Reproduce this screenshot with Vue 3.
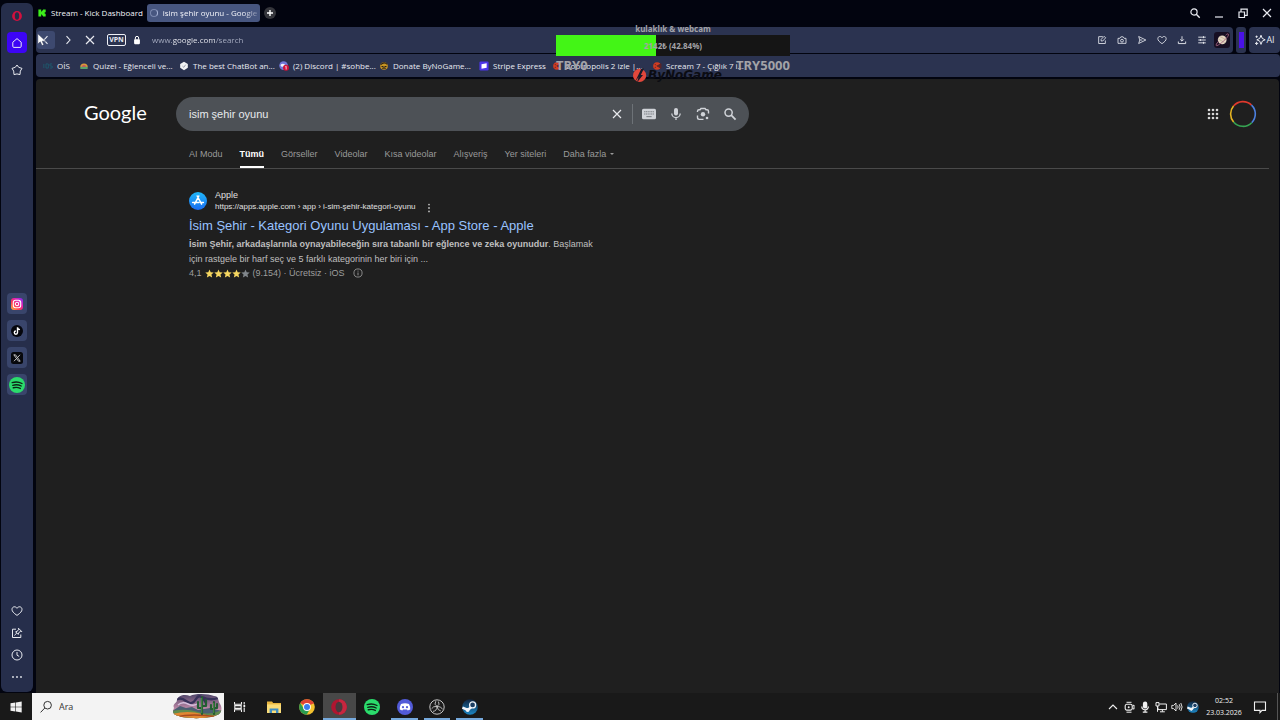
<script setup>
import { ref } from 'vue'

const address = ref('www.google.com/search')
const query = ref('isim şehir oyunu')
const taskSearch = ref('')

const bookmarks = [
  { icon: 'b-ois', label: 'OİS', size: 'tiny' },
  { icon: 'b-quiz', label: 'Quizei - Eğlenceli ve...' },
  { icon: 'b-chat', label: 'The best ChatBot an...' },
  { icon: 'b-discord', label: '(2) Discord | #sohbe...' },
  { icon: 'b-donate', label: 'Donate ByNoGame...' },
  { icon: 'b-stripe', label: 'Stripe Express', size: 'short' },
  { icon: 'b-film', label: 'Zootropolis 2 izle |...' },
  { icon: 'b-film', label: 'Scream 7 - Çığlık 7 i...' },
]

const pageTools = [
  { icon: 'i-edit', label: 'Düzenle' },
  { icon: 'i-camera', label: 'Anlık görüntü' },
  { icon: 'i-send', label: 'Gönder' },
  { icon: 'i-heart', label: 'Sabitle' },
  { icon: 'i-download', label: 'İndirilenler' },
  { icon: 'i-sliders', label: 'Kolay kurulum' },
]

const windowTools = [
  { icon: 'i-search', label: 'Sekmelerde ara' },
  { icon: 'i-min', label: 'Küçült' },
  { icon: 'i-restore', label: 'Geri yükle' },
  { icon: 'i-x', label: 'Kapat' },
]

const sideApps = [
  { icon: 'a-insta', label: 'Instagram' },
  { icon: 'a-tiktok', label: 'TikTok' },
  { icon: 'a-x', label: 'X' },
  { icon: 'a-spotify', label: 'Spotify' },
]

const sideTools = [
  { icon: 'i-heart', label: 'Sabitlenenler' },
  { icon: 'i-pinbox', label: 'Notlar' },
  { icon: 'i-clock', label: 'Geçmiş' },
  { icon: 'i-dots', label: 'Diğer' },
]

const filters = ['AI Modu', 'Tümü', 'Görseller', 'Videolar', 'Kısa videolar', 'Alışveriş', 'Yer siteleri']

const apps = [
  { icon: 't-folder', label: 'Dosya Gezgini' },
  { icon: 't-chrome', label: 'Chrome' },
  { icon: 't-opera', label: 'Opera', state: 'active' },
  { icon: 'a-spotify', label: 'Spotify' },
  { icon: 't-discord', label: 'Discord', state: 'open' },
  { icon: 't-obs', label: 'OBS', state: 'open' },
  { icon: 't-steam', label: 'Steam', state: 'open' },
]

const tray = [
  { icon: 'i-chev-up', label: 'Gizli simgeler' },
  { icon: 'i-meet', label: 'Kamera' },
  { icon: 'i-micfill', label: 'Mikrofon' },
  { icon: 'i-net', label: 'Ağ' },
  { icon: 'i-volume', label: 'Ses' },
  { icon: 't-steam', label: 'Steam' },
]
</script>

<template>
  <div class="desktop">
    <svg class="sprite" aria-hidden="true">
      <defs>
        <linearGradient id="g-insta" x1="0" y1="1" x2="1" y2="0">
          <stop offset="0" stop-color="#ffc53d" /><stop offset=".35" stop-color="#ff3a4e" />
          <stop offset=".65" stop-color="#e01fb0" /><stop offset="1" stop-color="#7a2cf5" />
        </linearGradient>
        <linearGradient id="g-store" x1="0" y1="0" x2="0" y2="1">
          <stop offset="0" stop-color="#1fb8fa" /><stop offset="1" stop-color="#1b6cf0" />
        </linearGradient>
        <linearGradient id="g-sky" x1="0" y1="0" x2="0" y2="1">
          <stop offset="0" stop-color="#4d4468" /><stop offset=".6" stop-color="#c08aa8" /><stop offset="1" stop-color="#e2a58c" />
        </linearGradient>
        <linearGradient id="g-steam" x1="0" y1="0" x2="0" y2="1">
          <stop offset="0" stop-color="#10243f" /><stop offset="1" stop-color="#1c86c4" />
        </linearGradient>
        <clipPath id="c-scene"><path d="M2 14C0 10 5 9 5 6C6 1 13 0 18 2C24-1 37 0 42 2C47 2 46 7 48 10C51 14 49 20 45 21C38 25 14 25 7 22C1 21 0 17 2 14Z" /></clipPath>
      </defs>
      <symbol id="i-x" viewBox="0 0 12 12"><path d="M2 2L10 10M10 2L2 10" fill="none" stroke="currentColor" stroke-width="1.2" /></symbol>
      <symbol id="i-min" viewBox="0 0 12 12"><path d="M2 10H10" stroke="currentColor" stroke-width="1.2" /></symbol>
      <symbol id="i-restore" viewBox="0 0 12 12"><path d="M2 5H7.5V10.5H2ZM4 5V2.2H10.2V8.4H7.5" fill="none" stroke="currentColor" stroke-width="1.2" /></symbol>
      <symbol id="i-search" viewBox="0 0 12 12"><circle cx="5" cy="5" r="3.1" fill="none" stroke="currentColor" stroke-width="1.2" /><path d="M7.3 7.3L10.7 10.7" stroke="currentColor" stroke-width="1.4" /></symbol>
      <symbol id="i-back" viewBox="0 0 12 12"><path d="M7.5 2.2L4 6L7.5 9.8" fill="none" stroke="currentColor" stroke-width="1.1" /></symbol>
      <symbol id="i-fwd" viewBox="0 0 12 12"><path d="M4.5 2.2L8 6L4.5 9.8" fill="none" stroke="currentColor" stroke-width="1.1" /></symbol>
      <symbol id="i-lock" viewBox="0 0 12 12"><rect x="2.5" y="5" width="7" height="6" rx="1" fill="currentColor" /><path d="M4 5.5V3.6A2 2 0 0 1 8 3.6V5.5" fill="none" stroke="currentColor" stroke-width="1.2" /></symbol>
      <symbol id="i-home" viewBox="0 0 12 12"><path d="M1.8 5.2L6 1.6L10.2 5.2V9.3Q10.2 10.4 9.1 10.4H2.9Q1.8 10.4 1.8 9.3Z" fill="none" stroke="currentColor" stroke-linejoin="round" /></symbol>
      <symbol id="i-penta" viewBox="0 0 12 12"><path d="M6 1L7.7 3.3L11 4.4L9.3 7.1L9 10.6L6 9.9L3 10.6L2.7 7.1L1 4.4L4.3 3.3Z" fill="none" stroke="currentColor" stroke-linejoin="round" /></symbol>
      <symbol id="i-edit" viewBox="0 0 12 12"><path d="M7 2H2V10.2H10V6.5M5 7.2V5.2L8.6 1.6L10.4 3.4L6.9 7.2Z" fill="none" stroke="currentColor" /></symbol>
      <symbol id="i-camera" viewBox="0 0 12 12"><path d="M1.2 4H3.4L4.6 2.2H7.4L8.6 4H10.8V10H1.2Z" fill="none" stroke="currentColor" stroke-linejoin="round" /><circle cx="6" cy="6.8" r="1.7" fill="none" stroke="currentColor" /></symbol>
      <symbol id="i-send" viewBox="0 0 12 12"><path d="M2 1.8L10.6 6L2 10.2L3.4 6ZM3.4 6H6.5" fill="none" stroke="currentColor" stroke-linejoin="round" /></symbol>
      <symbol id="i-heart" viewBox="0 0 12 12"><path d="M6 10.4C2.5 8 1 6.3 1 4.4C1 1.4 4.7.9 6 3.3C7.3.9 11 1.4 11 4.4C11 6.3 9.5 8 6 10.4Z" fill="none" stroke="currentColor" /></symbol>
      <symbol id="i-download" viewBox="0 0 12 12"><path d="M6 1.5V7.2M3.8 5.2L6 7.4L8.2 5.2M1.6 7.8V10.3H10.4V7.8" fill="none" stroke="currentColor" stroke-width="1.1" /></symbol>
      <symbol id="i-sliders" viewBox="0 0 12 12"><path d="M1.5 2.6H10.5M1.5 6H10.5M1.5 9.4H10.5M7.8 1.4V3.8M4 4.8V7.2M7.8 8.2V10.6" stroke="currentColor" stroke-width="1.1" /></symbol>
      <symbol id="i-pinbox" viewBox="0 0 12 12"><path d="M5 2.2H1.5V10.5H9.8V7.5M3.4 8.4L5.8 6M4.6 4.8L7.2 7.4L7.7 5.7L9.6 4.4L10.8 4.6L7.4 1.2L7.6 2.4L6.3 4.3Z" fill="none" stroke="currentColor" stroke-linejoin="round" /></symbol>
      <symbol id="i-clock" viewBox="0 0 12 12"><circle cx="6" cy="6" r="5" fill="none" stroke="currentColor" /><path d="M6 3V6.2L8.2 7.4" fill="none" stroke="currentColor" /></symbol>
      <symbol id="i-dots" viewBox="0 0 12 12"><g fill="currentColor"><circle cx="2" cy="6" r=".9" /><circle cx="6" cy="6" r=".9" /><circle cx="10" cy="6" r=".9" /></g></symbol>
      <symbol id="i-kebab" viewBox="0 0 12 12"><g fill="currentColor"><circle cx="6" cy="2.6" r=".9" /><circle cx="6" cy="6" r=".9" /><circle cx="6" cy="9.4" r=".9" /></g></symbol>
      <symbol id="i-spark" viewBox="0 0 12 12"><path d="M7 1.2Q7.4 5.4 11.2 5.8Q7.4 6.2 7 10.4Q6.6 6.2 2.8 5.8Q6.6 5.4 7 1.2ZM2.6 7.8V11M1 9.4H4.2M2.6 1.6V3.8M1.5 2.7H3.7" fill="none" stroke="currentColor" stroke-linejoin="round" /></symbol>
      <symbol id="i-planet" viewBox="0 0 16 16"><rect width="16" height="16" rx="3" fill="#160e22" /><circle cx="8.2" cy="7.8" r="4.4" fill="#e3d6c2" /><path d="M6 4.6L12 7.6M4.3 7L10.4 10.4" stroke="#b09a86" stroke-width=".6" /><path d="M4.4 9.4C1.4 12.8 1.4 14.6 4 13.2C8 11 15.6 4 14.4 2.2C13.8 1.4 12.6 2.2 11.6 3.2" fill="none" stroke="#a0607c" stroke-width=".9" /></symbol>
      <symbol id="i-keyboard" viewBox="0 0 16 12"><rect x="0" y="0" width="16" height="12" rx="1.8" fill="currentColor" /><path d="M2.4 3.4H13.6M2.4 6H13.6" stroke="#777b80" stroke-width="1.3" stroke-dasharray="1.4 .6" /><path d="M5 9H11" stroke="#777b80" stroke-width="1.2" /></symbol>
      <symbol id="i-mic" viewBox="0 0 14 14"><rect x="5" y="1" width="4" height="7.4" rx="2" fill="currentColor" /><path d="M2.8 6.4A4.2 4.2 0 0 0 11.2 6.4M7 10.4V13" fill="none" stroke="currentColor" stroke-width="1.3" /></symbol>
      <symbol id="i-lens" viewBox="0 0 14 14"><path d="M1.5 5V4.2Q1.5 2.8 3 2.8H4L5 1.5H9L10 2.8H11Q12.5 2.8 12.5 4.2V6.4M1.5 8.5V10.6Q1.5 12.4 3.3 12.4H7.5" fill="none" stroke="currentColor" stroke-width="1.4" /><circle cx="7" cy="7.2" r="2.2" fill="currentColor" /><circle cx="11" cy="11" r="1.3" fill="currentColor" /></symbol>
      <symbol id="i-glass" viewBox="0 0 14 14"><circle cx="5.6" cy="5.6" r="3.6" fill="none" stroke="currentColor" stroke-width="1.5" /><path d="M8.2 8.2L12.6 12.6" stroke="currentColor" stroke-width="1.8" /></symbol>
      <symbol id="i-grid" viewBox="0 0 12 12"><g fill="currentColor"><circle cx="2" cy="2" r="1.3" /><circle cx="6" cy="2" r="1.3" /><circle cx="10" cy="2" r="1.3" /><circle cx="2" cy="6" r="1.3" /><circle cx="6" cy="6" r="1.3" /><circle cx="10" cy="6" r="1.3" /><circle cx="2" cy="10" r="1.3" /><circle cx="6" cy="10" r="1.3" /><circle cx="10" cy="10" r="1.3" /></g></symbol>
      <symbol id="i-info" viewBox="0 0 12 12"><circle cx="6" cy="6" r="4.9" fill="none" stroke="currentColor" /><path d="M6 5.4V8.8M6 3.2V4.3" stroke="currentColor" stroke-width="1.1" /></symbol>
      <symbol id="i-star" viewBox="0 0 12 12"><path d="M6 .6L7.6 4.3L11.6 4.7L8.6 7.4L9.5 11.4L6 9.3L2.5 11.4L3.4 7.4L.4 4.7L4.4 4.3Z" fill="currentColor" /></symbol>
      <symbol id="i-chev-up" viewBox="0 0 12 12"><path d="M2 8L6 4L10 8" fill="none" stroke="currentColor" stroke-width="1.1" /></symbol>
      <symbol id="i-meet" viewBox="0 0 12 12"><rect x="2.2" y="3.3" width="7" height="5.8" rx="1.6" fill="none" stroke="currentColor" stroke-width="1.1" /><path d="M3.5 1.3H8.5M3.5 11.2H8.5M9.4 5L11 4V8.2L9.4 7.2" fill="none" stroke="currentColor" /><circle cx="5.7" cy="6.2" r="1" fill="currentColor" /></symbol>
      <symbol id="i-micfill" viewBox="0 0 12 12"><rect x="3.9" y=".6" width="4.4" height="7" rx="2.2" fill="currentColor" /><path d="M2.8 5.6C2.8 9.8 9.4 9.8 9.4 5.6M6.1 8.8V11.2M3.8 11.2H8.4" fill="none" stroke="currentColor" stroke-width="1.2" /></symbol>
      <symbol id="i-net" viewBox="0 0 12 12"><path d="M4.4 3H11.4V8.6H3V6.5M7.4 8.6V10.6M5 10.8H9.8M1 1.6H4V5H1ZM2.5 5V10.8" fill="none" stroke="currentColor" /></symbol>
      <symbol id="i-volume" viewBox="0 0 12 12"><path d="M.8 4.4H2.6L5 2V10L2.6 7.6H.8ZM6.6 4.4Q7.6 6 6.6 7.6M8.2 3.2Q10 6 8.2 8.8M9.8 2Q12.4 6 9.8 10" fill="none" stroke="currentColor" stroke-width=".9" /></symbol>
      <symbol id="i-note" viewBox="0 0 14 14"><path d="M1.5 2H12.5V10.4H9L7 12.6V10.4H1.5Z" fill="none" stroke="currentColor" stroke-width="1.1" /></symbol>
      <symbol id="i-win" viewBox="0 0 12 12"><path d="M.5 2.2L5.4 1.5V5.7H.5ZM6 1.4L11.7.6V5.7H6ZM.5 6.3H5.4V10.5L.5 9.8ZM6 6.3H11.7V11.4L6 10.6Z" fill="currentColor" /></symbol>
      <symbol id="i-taskview" viewBox="0 0 12 12"><path d="M.5 1V3.2H7.5V1M.5 11V8.8H7.5V11M.8 4.6H7.2V7.4H.8ZM10.2 1V3.4M10.2 6.6V11" fill="none" stroke="currentColor" stroke-width="1.1" /><rect x="9.4" y="4" width="1.8" height="2" fill="currentColor" /></symbol>
      <symbol id="a-insta" viewBox="0 0 12 12"><rect width="12" height="12" rx="3" fill="url(#g-insta)" /><rect x="2.3" y="2.3" width="7.4" height="7.4" rx="2.2" fill="none" stroke="#fff" stroke-width="1.1" /><circle cx="6" cy="6" r="1.7" fill="none" stroke="#fff" stroke-width="1.1" /><circle cx="8.3" cy="3.8" r=".5" fill="#fff" /></symbol>
      <symbol id="a-tiktok" viewBox="0 0 12 12"><circle cx="6" cy="6" r="6" fill="#05060c" /><path d="M6.5 2.2V7.6A1.6 1.6 0 1 1 4.9 6M6.5 2.4Q6.9 4.4 9 4.6" fill="none" stroke="#fff" stroke-width="1.4" /></symbol>
      <symbol id="a-x" viewBox="0 0 12 12"><rect width="12" height="12" rx="2.5" fill="#07080c" /><path d="M2.8 2.8H4.5L9.2 9.2H7.5ZM9 2.8L6.6 5.5M5.4 6.6L3 9.2" fill="none" stroke="#e8e8e8" stroke-width=".8" /></symbol>
      <symbol id="a-spotify" viewBox="0 0 16 16"><circle cx="8" cy="8" r="8" fill="#2bdc6c" /><path d="M3.2 5.6Q8.4 4 13 6.5M3.8 8.3Q8.3 7 12.2 9M4.3 10.8Q8.1 9.8 11.3 11.4" fill="none" stroke="#0c2415" stroke-width="1.4" stroke-linecap="round" /></symbol>
      <symbol id="a-opera" viewBox="0 0 12 12"><ellipse cx="6" cy="6" rx="4.9" ry="5.1" fill="#d3103e" /><ellipse cx="6" cy="6" rx="2.2" ry="3.7" fill="#252d49" /></symbol>
      <symbol id="a-kick" viewBox="0 0 10 10"><path d="M.5.5H4V3H5V1.8H6.2V.5H9.6V4H8.4V6H9.6V9.5H6.2V8.2H5V7H4V9.5H.5Z" fill="#3df01b" /></symbol>
      <symbol id="b-ois" viewBox="0 0 12 12"><path d="M1 3.5V8.5M3.6 3.5H6.4V8.5H3.6ZM11 3.5H8.4V6H11V8.5H8.4" fill="none" stroke="#1d5c70" /></symbol>
      <symbol id="b-quiz" viewBox="0 0 12 12"><path d="M1.5 7.5A4.5 4.5 0 0 1 10.5 7.5Z" fill="#d99a3a" /><path d="M3.4 7.5A2.6 2.6 0 0 1 8.6 7.5Z" fill="#d24f5b" /><rect x="1.5" y="7" width="9" height="2.6" rx="1" fill="#5aa36b" /></symbol>
      <symbol id="b-chat" viewBox="0 0 12 12"><path d="M6 1L10.6 3.6V8L6 11L1.4 8V3.6Z" fill="#f2f3f5" /><path d="M4.2 6.2L5.8 7.6L8 4.4" fill="none" stroke="#8b90a0" /></symbol>
      <symbol id="b-discord" viewBox="0 0 12 12"><circle cx="5.5" cy="5.5" r="5.2" fill="#7177d8" /><ellipse cx="4.6" cy="5" rx="2.8" ry="1.8" fill="#f2f3fa" /><circle cx="8.4" cy="8.2" r="3.6" fill="#d01238" /><path d="M7.6 7L8.6 6.3V10.2" fill="none" stroke="#fff" stroke-width=".9" /></symbol>
      <symbol id="b-donate" viewBox="0 0 12 12"><circle cx="6" cy="6" r="4.6" fill="#c79422" /><path d="M2 4.4Q6 .4 10 4M3 6.5H5.4M6.6 6.5H9M4 9Q6 7.6 8 9" fill="none" stroke="#2b2118" stroke-width="1.3" /></symbol>
      <symbol id="b-stripe" viewBox="0 0 12 12"><rect x=".5" y=".5" width="11" height="11" rx="1.5" fill="#4c35e8" /><path d="M3 4L9.2 2.8V8L3 9.2Z" fill="#fff" /></symbol>
      <symbol id="b-film" viewBox="0 0 12 12"><circle cx="6" cy="6" r="4.6" fill="#d23c22" /><path d="M6 6L10.8 3.2V8.8ZM3.2 3.4L5 5.4M3 8.4L5 7" fill="#5b2528" stroke="#5b2528" /></symbol>
      <symbol id="t-folder" viewBox="0 0 16 16"><path d="M1 2.6H6L7.2 4H15V14H1Z" fill="#e9b640" /><path d="M1 5.4H15V14H1Z" fill="#fbdc78" /><path d="M3.6 14V9.4H12.4V14H10V11.6H6V14Z" fill="#3f8ec4" /></symbol>
      <symbol id="t-chrome" viewBox="0 0 16 16"><circle cx="8" cy="8" r="7.8" fill="#f2c12e" /><path d="M8 8L1.25 4.1A7.8 7.8 0 0 1 14.75 4.1Z" fill="#df4334" /><path d="M1.25 4.1A7.8 7.8 0 0 0 7.6 15.8L11.2 9.8L4.8 9.8Z" fill="#2a9d50" /><path d="M8 4.1H14.75" stroke="#df4334" /><circle cx="8" cy="8" r="3.9" fill="#fff" /><circle cx="8" cy="8" r="3" fill="#3b7ded" /></symbol>
      <symbol id="t-opera" viewBox="0 0 16 16"><circle cx="8" cy="8" r="7.8" fill="#b01530" /><path d="M8 .2A7.8 7.8 0 0 1 8 15.8Z" fill="#c8263f" /><ellipse cx="8" cy="8" rx="3.5" ry="5.3" fill="#48383d" /></symbol>
      <symbol id="t-discord" viewBox="0 0 16 16"><circle cx="8" cy="8" r="8" fill="#525bd8" /><path d="M4 5Q8 3.4 12 5Q13.6 8 13.2 10.6L10.7 11.6L10 10.6H6L5.3 11.6L2.8 10.6Q2.4 8 4 5Z" fill="#fff" /><circle cx="6" cy="8.2" r="1.1" fill="#525bd8" /><circle cx="10" cy="8.2" r="1.1" fill="#525bd8" /></symbol>
      <symbol id="t-obs" viewBox="0 0 16 16"><circle cx="8" cy="8" r="7.2" fill="#1c1c1c" stroke="#c7c7c7" /><path d="M8 7.4Q4.6 5.6 6.8 2.2M8 7.4Q11.4 5.6 9.4 2.6M8 7.4Q12.4 7.2 13.6 10.4M8 7.4Q8.6 11.4 11.8 12M8 7.4Q8 12 4 12.4M8 7.4Q4 7 2.6 9.8" fill="none" stroke="#c7c7c7" stroke-width=".9" /></symbol>
      <symbol id="t-steam" viewBox="0 0 16 16"><circle cx="8" cy="8" r="7.8" fill="url(#g-steam)" /><path d="M.4 8.6L6 11L10.6 6.6" fill="none" stroke="#f1f5fa" stroke-width="2.6" /><circle cx="10.6" cy="5.9" r="3" fill="#1b3e63" stroke="#f1f5fa" stroke-width="1.3" /><circle cx="5.6" cy="11" r="1.9" fill="#f1f5fa" /></symbol>
    </svg>

    <div class="workspace">
      <aside class="side">
        <nav class="side-top" aria-label="Opera">
          <button class="side-btn" aria-label="Opera menüsü"><svg class="ic12"><use href="#a-opera" /></svg></button>
          <button class="side-btn home" aria-label="Çalışma alanı"><svg class="ic12"><use href="#i-home" /></svg></button>
          <button class="side-btn" aria-label="Yer imleri"><svg class="ic12"><use href="#i-penta" /></svg></button>
        </nav>
        <nav class="side-apps" aria-label="Uygulamalar">
          <button v-for="a in sideApps" :key="a.icon" class="side-btn tile" :aria-label="a.label">
            <svg :class="a.icon === 'a-spotify' ? 'ic16' : 'ic12'"><use :href="'#' + a.icon" /></svg>
          </button>
        </nav>
        <nav class="side-tools" aria-label="Araçlar">
          <button v-for="t in sideTools" :key="t.icon" class="side-btn slim" :aria-label="t.label">
            <svg class="ic12"><use :href="'#' + t.icon" /></svg>
          </button>
        </nav>
      </aside>

      <div class="browser">
        <header class="tabs">
          <button class="tab first"><svg class="ic8"><use href="#a-kick" /></svg><span>Stream - Kick Dashboard</span></button>
          <button class="tab current"><i class="spinner"></i><span class="fade">isim şehir oyunu - Google</span></button>
          <button class="add" aria-label="Yeni sekme"><svg class="ic8" viewBox="0 0 8 8"><path d="M4 1V7M1 4H7" stroke="currentColor" stroke-width="1.4" /></svg></button>
          <div class="win">
            <button v-for="w in windowTools" :key="w.icon" :aria-label="w.label"><svg class="ic12"><use :href="'#' + w.icon" /></svg></button>
          </div>
        </header>

        <div class="bars">
          <div class="toolbar">
            <button class="nav-btn hover" aria-label="Geri"><svg class="ic12"><use href="#i-back" /></svg></button>
            <button class="nav-btn" aria-label="İleri"><svg class="ic12"><use href="#i-fwd" /></svg></button>
            <button class="nav-btn" aria-label="Durdur"><svg class="ic12"><use href="#i-x" /></svg></button>
            <button class="vpn">VPN</button>
            <svg class="ic10 lock"><use href="#i-lock" /></svg>
            <input v-model="address" class="address" aria-label="Adres" spellcheck="false" />
            <button v-for="p in pageTools" :key="p.icon" class="tool" :aria-label="p.label"><svg class="ic10"><use :href="'#' + p.icon" /></svg></button>
            <button class="tool" aria-label="Profil"><svg class="ic16"><use href="#i-planet" /></svg></button>
          </div>
          <div class="chip"><i></i></div>
          <button class="ai"><svg class="ic12"><use href="#i-spark" /></svg>AI</button>
        </div>

        <nav class="bookmarks" aria-label="Yer imleri çubuğu">
          <a v-for="b in bookmarks" :key="b.label" href="#" class="bookmark" :class="b.size">
            <svg class="ic10"><use :href="'#' + b.icon" /></svg><span>{{ b.label }}</span>
          </a>
        </nav>

        <main class="page">
          <div class="search-row">
            <a href="#" class="logo">Google</a>
            <form class="search" role="search" @submit.prevent>
              <input v-model="query" aria-label="Ara" spellcheck="false" />
              <button type="button" class="clear" aria-label="Temizle"><svg class="ic12"><use href="#i-x" /></svg></button>
              <button type="button" class="s-btn" aria-label="Klavye"><svg class="ic14"><use href="#i-keyboard" /></svg></button>
              <button type="button" class="s-btn" aria-label="Sesle ara"><svg class="ic14"><use href="#i-mic" /></svg></button>
              <button type="button" class="s-btn" aria-label="Görselle ara"><svg class="ic14"><use href="#i-lens" /></svg></button>
              <button type="submit" class="s-btn" aria-label="Google'da ara"><svg class="ic14"><use href="#i-glass" /></svg></button>
            </form>
            <div class="account">
              <button aria-label="Google uygulamaları"><svg class="ic12"><use href="#i-grid" /></svg></button>
              <button class="avatar" aria-label="Google hesabı">
                <svg viewBox="0 0 28 28" fill="none" stroke-width="1.6">
                  <path d="M4.5 6A12.3 12.3 0 0 1 22.5 5.1" stroke="#e0392d" />
                  <path d="M22.5 5.1A12.3 12.3 0 0 1 22.7 22.7" stroke="#4c80e0" />
                  <path d="M22.7 22.7A12.3 12.3 0 0 1 4.6 22" stroke="#36a553" />
                  <path d="M4.6 22A12.3 12.3 0 0 1 4.5 6" stroke="#e6b422" />
                </svg>
              </button>
            </div>
          </div>

          <nav class="filters" aria-label="Arama türleri">
            <a v-for="f in filters" :key="f" href="#" :class="{ on: f === 'Tümü' }">{{ f }}</a>
            <button class="more">Daha fazla <i></i></button>
          </nav>

          <article class="result">
            <div class="source">
              <svg class="store" viewBox="0 0 18 18"><circle cx="9" cy="9" r="9" fill="url(#g-store)" /><path d="M9.8 4L5.6 12.2M8.2 4L12.6 12.2M3.6 10.6H10M12 10.6H14.4" stroke="#fff" stroke-width="1.5" stroke-linecap="round" /></svg>
              <div class="site">
                <span>Apple</span>
                <cite>https://apps.apple.com › app › i-sim-şehir-kategori-oyunu</cite>
              </div>
              <button class="kebab" aria-label="Bu sonuç hakkında"><svg class="ic12"><use href="#i-kebab" /></svg></button>
            </div>
            <h3><a href="#">İsim Şehir - Kategori Oyunu Uygulaması - App Store - Apple</a></h3>
            <p class="snippet"><b>İsim Şehir, arkadaşlarınla oynayabileceğin sıra tabanlı bir eğlence ve zeka oyunudur</b>. Başlamak<br />için rastgele bir harf seç ve 5 farklı kategorinin her biri için ...</p>
            <div class="rating">
              <span>4,1</span>
              <span class="stars"><svg v-for="n in 5" :key="n" :class="{ off: n === 5 }"><use href="#i-star" /></svg></span>
              <span>(9.154) · Ücretsiz · iOS</span>
              <svg class="ic10 info"><use href="#i-info" /></svg>
            </div>
          </article>
        </main>
      </div>
    </div>

    <footer class="taskbar">
      <button class="start" aria-label="Başlat"><svg class="ic12"><use href="#i-win" /></svg></button>
      <label class="task-search">
        <svg class="ic14" viewBox="0 0 14 14"><circle cx="8.6" cy="5.2" r="3.8" fill="none" stroke="#333" /><path d="M5.8 8L1.6 12.4" stroke="#333" /></svg>
        <input v-model="taskSearch" placeholder="Ara" aria-label="Ara" />
        <svg class="scene" viewBox="0 0 50 25">
          <g clip-path="url(#c-scene)">
            <rect width="50" height="25" fill="url(#g-sky)" />
            <path d="M2 7Q8 2 14 7T24 5T34 9M30 3Q38 7 46 4" fill="none" stroke="#38325a" stroke-width="2.4" />
            <path d="M6 11Q10 7 16 10T27 9" fill="none" stroke="#d6bfdc" stroke-width="1.4" />
            <path d="M0 17L8 12L14 14L20 13L26 16L38 14L50 17V25H0Z" fill="#4b5f73" />
            <path d="M0 17Q14 14 26 18T50 16V25H0Z" fill="#5f8b4d" />
            <path d="M0 20Q16 16 30 20T50 19V25H0Z" fill="#e08732" />
            <path d="M4 23Q20 19 46 23" fill="none" stroke="#a84a1f" stroke-width="1.6" />
            <path d="M30 20V3M30 14H26V8M30 12H34V6M42 20V8M42 15H39V11M42 14H45V10" fill="none" stroke="#235c33" stroke-width="2.2" stroke-linecap="round" stroke-linejoin="round" />
            <path d="M29.7 19V4M41.7 19V9" stroke="#5ca04c" stroke-width=".7" />
          </g>
        </svg>
      </label>
      <button class="view" aria-label="Görev görünümü"><svg class="ic12"><use href="#i-taskview" /></svg></button>
      <div class="apps">
        <button v-for="a in apps" :key="a.label" :class="a.state" :aria-label="a.label"><svg class="ic16"><use :href="'#' + a.icon" /></svg></button>
      </div>
      <div class="tray">
        <button v-for="t in tray" :key="t.label" :aria-label="t.label"><svg class="ic12"><use :href="'#' + t.icon" /></svg></button>
      </div>
      <div class="clock"><time>02:52</time><span>23.03.2026</span></div>
      <button class="note" aria-label="Bildirimler"><svg class="ic14"><use href="#i-note" /></svg></button>
      <i class="peek"></i>
    </footer>

    <section class="goal" aria-label="Bağış hedefi">
      <div class="goal-title">kulaklık &amp; webcam</div>
      <div class="goal-bar"><span>2142₺ (42.84%)</span></div>
      <div class="goal-ends"><span>TRY0</span><span>TRY5000</span></div>
      <div class="goal-brand">
        <svg class="ic16" viewBox="0 0 16 16"><circle cx="7.6" cy="8.4" r="6.6" fill="#e2473b" /><path d="M3 15L9.4 1.4H12L8.8 8H11L5 15.4L6.6 10Z" fill="#191b29" /></svg>
        <span>ByNoGame</span>
      </div>
    </section>

    <svg class="cursor" viewBox="0 0 10 14"><path d="M.8.8V11L3.3 8.8L5 12.6L6.8 11.8L5.2 8.2H8.8Z" fill="#fff" stroke="#333a55" stroke-width=".5" /></svg>
  </div>
</template>

<style>
body {
  background: #02040f;
}
</style>

<style scoped>
.desktop {
  position: relative;
  display: flex;
  flex-direction: column;
  min-height: 100vh;
  overflow: hidden;
  background: #02040f;
  color: #e8eaf0;
  font: 8px/12px "Open Sans", "Noto Sans", sans-serif;
}
.desktop *, .desktop { box-sizing: border-box; }
.sprite { position: absolute; width: 0; height: 0; }
svg { display: block; flex: none; }
.ic8 { width: 8px; height: 8px; }
.ic10 { width: 10px; height: 10px; }
.ic12 { width: 12px; height: 12px; }
.ic14 { width: 14px; height: 14px; }
.ic16 { width: 16px; height: 16px; }
button {
  display: flex;
  align-items: center;
  justify-content: center;
  padding: 0;
  border: 0;
  background: none;
  color: inherit;
  font: inherit;
}
input {
  min-width: 0;
  padding: 0;
  border: 0;
  outline: 0;
  background: none;
  color: inherit;
  font: inherit;
}
a { color: inherit; text-decoration: none; }

.workspace { display: flex; flex: 1; gap: 3px; padding-left: 1px; }
.side {
  display: flex;
  flex-direction: column;
  flex: 0 0 32px;
  margin: 3px 0 1px;
  padding: 3px 0 4px;
  border-radius: 6px;
  background: #262e4b;
}
.side nav { display: flex; flex-direction: column; align-items: center; }
.side-top, .side-apps { gap: 6px; }
.side-top { margin-top: -1px; }
.side-btn { width: 20px; height: 21px; border-radius: 4px; }
.side-btn.home { background: #3d05f5; }
.side-btn.tile { background: #39456b; }
.side-btn.slim { height: 22px; }
.side-apps { margin: auto 0; padding-top: 8px; }

.browser { display: flex; flex: 1; flex-direction: column; min-width: 0; }
.tabs { display: flex; align-items: center; height: 27px; padding: 0 1px 2px 2px; }
.tab { gap: 5px; height: 18px; white-space: nowrap; color: #f4f5fa; }
.tab.first { width: 109px; justify-content: flex-start; }
.tab.current { width: 113px; padding: 0 4px; border-radius: 3px; background: #475680; }
.fade { mask-image: linear-gradient(to right, #000 85%, rgba(0, 0, 0, .3)); }
.spinner { flex: none; width: 8px; height: 8px; border: 1px solid #7a87ad; border-right-color: #a9b5d8; border-radius: 50%; }
.add { width: 12px; height: 12px; margin-left: 4px; border-radius: 50%; background: #35363c; color: #fff; }
.win { display: flex; margin-left: auto; }
.win button { width: 24px; height: 24px; }

.bars { display: flex; gap: 3px; height: 26px; }
.toolbar {
  display: flex;
  flex: 1;
  align-items: center;
  min-width: 0;
  padding: 0 1px;
  border-radius: 4px;
  background: #2b3350;
}
.nav-btn { width: 18px; height: 18px; margin-right: 4px; border-radius: 3px; }
.nav-btn.hover { background: #3d496f; }
.vpn {
  width: 19px;
  height: 12px;
  margin-left: 4px;
  border: 1px solid #eef0f6;
  border-radius: 2px;
  font: bold 7px/10px "Open Sans", sans-serif;
}
.lock { margin: 0 10px 0 6px; color: #fff; }
.address {
  flex: 1;
  background: linear-gradient(to right, #aab0c4 20px, #f4f5fa 20px, #f4f5fa 64px, #aab0c4 64px);
  background-clip: text;
  color: transparent;
}
.tool { width: 20px; height: 20px; }
.chip { display: flex; align-items: center; justify-content: center; width: 10px; border-radius: 3px; background: #2b3350; }
.chip i { width: 5px; height: 16px; background: #4a12e8; }
.ai { width: 31px; border-radius: 4px; background: #2b3350; font-size: 9px; }

.bookmarks {
  display: flex;
  align-items: center;
  height: 23px;
  margin: 1px 0 2px;
  padding-left: 7px;
  border-radius: 4px;
  background: #2b3350;
  white-space: nowrap;
}
.bookmark { display: flex; flex: 0 0 100px; align-items: center; gap: 4px; }
.bookmark.tiny { flex-basis: 36px; }
.bookmark.short { flex-basis: 73px; }

.page {
  flex: 1;
  margin-right: 1px;
  border-radius: 4px 4px 0 0;
  background: #1f1f1f;
  color: #bfbfbf;
  font: 9px/12px "Liberation Sans", Arial, sans-serif;
}
.search-row { display: flex; align-items: center; height: 34px; margin-top: 18px; padding: 0 22px 0 48px; }
.logo { width: 92px; padding-bottom: 4px; color: #fff; font: 20px/28px Lato, sans-serif; }
.search {
  display: flex;
  align-items: center;
  width: 573px;
  height: 34px;
  padding: 0 6px 0 13px;
  border-radius: 17px;
  background: #4d5156;
  color: #e8eaed;
}
.search input { flex: 1; font-size: 11px; line-height: 16px; }
.clear { width: 32px; height: 20px; border-right: 1px solid #6d7277; margin-right: 2px; }
.s-btn { width: 27px; height: 20px; color: #d0d3d8; }
.account { display: flex; align-items: center; gap: 10px; margin-left: auto; color: #d8d8d8; }
.avatar { width: 28px; height: 28px; }
.avatar svg { width: 28px; height: 28px; }

.filters {
  display: flex;
  gap: 17px;
  height: 38px;
  margin-right: 10px;
  padding-left: 153px;
  border-bottom: 1px solid #4a4a4a;
  color: #9a9a9a;
}
.filters a { height: 37px; line-height: 46px; }
.filters a.on { border-bottom: 2px solid #fff; color: #fff; font-weight: bold; }
.more { height: 46px; }
.more i { margin-left: 4px; border: 2px solid transparent; border-top-color: #9a9a9a; border-bottom: 0; }

.result { padding: 19px 0 0 153px; }
.source { display: flex; align-items: center; height: 26px; }
.store { width: 18px; height: 18px; margin-right: 8px; }
.site { display: flex; flex-direction: column; color: #e0e0e0; }
.site cite { font: 8px/12px "Liberation Sans", Arial, sans-serif; }
.kebab { align-self: flex-end; margin-left: 7px; }
h3 { margin: 3px 0 2px; color: #99c3ff; font: 13px/18px "Liberation Sans", Arial, sans-serif; }
.snippet { margin: 0; line-height: 15px; }
.rating { display: flex; align-items: center; gap: 3px; height: 12px; color: #9e9e9e; }
.stars { display: flex; color: #f5d660; }
.stars svg { width: 9px; height: 9px; }
.stars .off { color: #80868b; }
.info { margin-left: 5px; }

.taskbar { display: flex; height: 27px; background: #191919; color: #f0f0f0; }
.start { width: 32px; }
.task-search { display: flex; align-items: center; width: 192px; padding: 0 2px 0 7px; background: #f3f3f3; color: #333; }
.task-search input { flex: 1; margin-left: 6px; font-size: 9px; }
.task-search input::placeholder { color: #333; opacity: 1; }
.scene { width: 50px; height: 25px; }
.view { width: 32px; margin-right: 2px; }
.apps { display: grid; grid-template-columns: repeat(7, 1fr); width: 228px; }
.apps button { position: relative; }
.apps .active { background: #484848; }
.apps .open::after, .apps .active::after {
  content: "";
  position: absolute;
  right: 3px;
  bottom: 0;
  left: 3px;
  height: 2px;
  background: #76a9dc;
}
.apps .active::after { right: 0; left: 0; }
.tray { display: flex; margin-left: auto; }
.tray button { width: 16px; }
.clock { display: flex; flex-direction: column; align-items: center; justify-content: center; width: 46px; font-size: 7px; }
.note { width: 26px; }
.peek { width: 5px; margin-right: 2px; border-right: 1px solid #555; }

.goal {
  position: absolute;
  top: 23px;
  left: 556px;
  width: 234px;
  color: #a3a3a8;
  font: bold 8px/12px "Noto Sans", sans-serif;
  text-align: center;
}
.goal-bar {
  height: 21px;
  background: linear-gradient(to right, #43f516 42.84%, #151515 42.84%);
  line-height: 21px;
}
.goal-ends { display: flex; justify-content: space-between; font-size: 13px; line-height: 18px; }
.goal-brand {
  position: absolute;
  top: 44px;
  left: 76px;
  display: flex;
  align-items: center;
  color: #0b0c12;
  font: italic bold 12px/16px "DejaVu Sans", sans-serif;
}
.cursor { position: absolute; top: 33px; left: 37px; width: 10px; height: 14px; }
</style>
